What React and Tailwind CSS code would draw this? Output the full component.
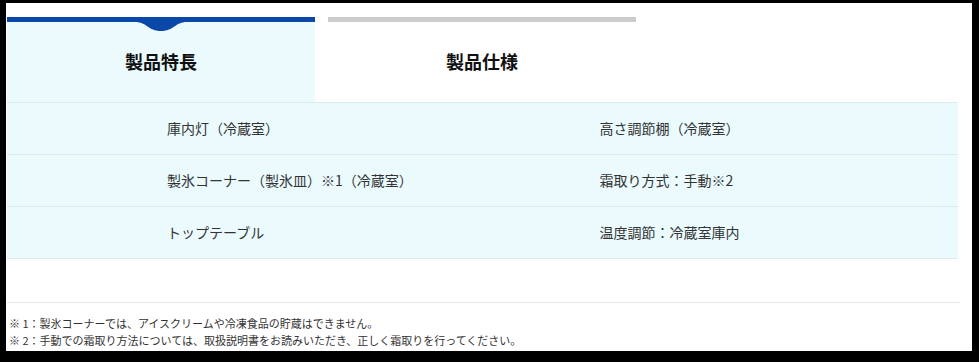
export default function App() {
  const rows = [
    ["庫内灯（冷蔵室）", "高さ調節棚（冷蔵室）"],
    ["製氷コーナー（製氷皿）※1（冷蔵室）", "霜取り方式：手動※2"],
    ["トップテーブル", "温度調節：冷蔵室庫内"],
  ];

  return (
    <div className="w-[979px] h-[362px] bg-black pt-[3px] pl-[6px] pr-[7px] pb-[11px]">
      <div
        className="bg-white h-full pl-px pr-[14px] text-[#333]"
        style={{ fontFamily: '"Noto Sans CJK JP", "Noto Sans", sans-serif' }}
      >
        {/* Tabs */}
        <div className="pt-[14px] grid grid-cols-3 gap-[13px] w-[950px]">
          <div className="relative h-[85px] bg-[#eafafd] border-t-[5px] border-[#0a47a9] flex items-center justify-center">
            <svg
              className="absolute left-1/2 -translate-x-1/2 top-0"
              width="52"
              height="9"
              viewBox="0 0 52 9"
            >
              <path d="M0 0 C 12 0, 13 9, 26 9 C 39 9, 40 0, 52 0 Z" fill="#0a47a9" />
            </svg>
            <span className="text-[18px] font-bold text-[#111] pb-[1px]">製品特長</span>
          </div>
          <div className="h-[85px] bg-white border-t-[5px] border-[#cccccc] flex items-center justify-center">
            <span className="text-[18px] font-bold text-[#111] pb-[1px]">製品仕様</span>
          </div>
          <div />
        </div>

        {/* Table */}
        <div className="w-[951px] border-t border-[#dcebee] bg-[#eafafd]">
          {rows.map((r, i) => (
            <div key={i} className="grid grid-cols-2 h-[52px] border-b border-[#dcebee] text-[14px]">
              <div className="flex items-center pl-[160px]">{r[0]}</div>
              <div className="flex items-center pl-[117px]">{r[1]}</div>
            </div>
          ))}
        </div>

        {/* Notes */}
        <div className="mt-[43px] border-t border-[#e6e6e6] pt-[12px] pl-[2px] text-[11px] leading-[17px] w-[953px]">
          <p>※ 1：製氷コーナーでは、アイスクリームや冷凍食品の貯蔵はできません。</p>
          <p>※ 2：手動での霜取り方法については、取扱説明書をお読みいただき、正しく霜取りを行ってください。</p>
        </div>
      </div>
    </div>
  );
}
